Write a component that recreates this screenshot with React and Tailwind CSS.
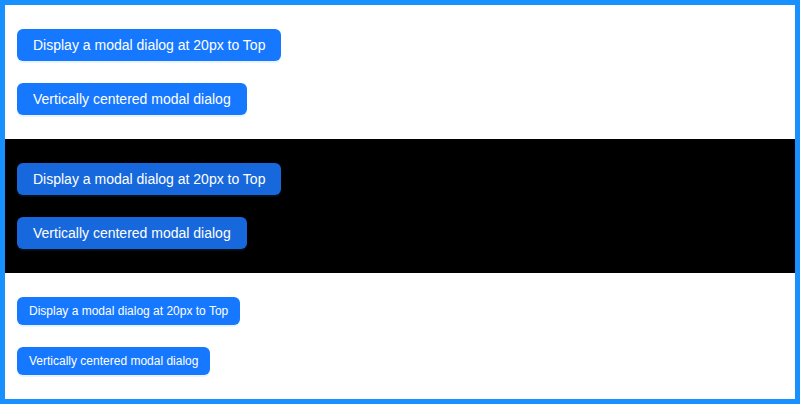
const big =
  "h-8 px-4 rounded-md text-[14px] text-white shadow-[0_2px_0_rgba(5,145,255,0.1)] whitespace-nowrap";
const small =
  "h-7 px-3 rounded-md text-[12px] text-white shadow-[0_2px_0_rgba(5,145,255,0.1)] whitespace-nowrap";

function Section({ dark, btn }) {
  return (
    <div className={`flex flex-col items-start gap-[22px] px-3 py-6 ${dark ? "bg-black" : "bg-white"}`}>
      <button className={`${btn} ${dark ? "bg-[#1668dc]" : "bg-[#1677ff]"}`}>
        Display a modal dialog at 20px to Top
      </button>
      <button className={`${btn} ${dark ? "bg-[#1668dc]" : "bg-[#1677ff]"}`}>
        Vertically centered modal dialog
      </button>
    </div>
  );
}

export default function App() {
  return (
    <div
      className="w-[800px] h-[404px] border-[5px] border-[#1890ff] bg-white flex flex-col"
      style={{ fontFamily: '"Liberation Sans", Arial, sans-serif' }}
    >
      <Section btn={big} />
      <Section dark btn={big} />
      <Section btn={small} />
    </div>
  );
}
